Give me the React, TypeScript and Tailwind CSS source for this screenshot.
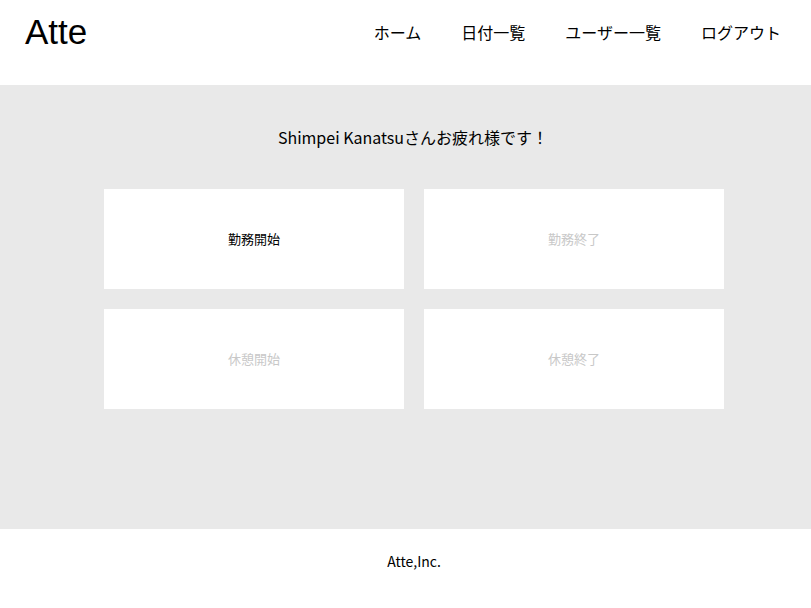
export default function App() {
  const jp = { fontFamily: '"Noto Sans CJK JP", "Liberation Sans", sans-serif' };
  return (
    <div className="w-[811px] h-[608px] flex flex-col bg-white text-black overflow-hidden" style={jp}>
      <header className="h-[85px] flex items-start justify-between pl-[25px] pr-[30px] pt-[10px]">
        <div className="text-[35px] leading-[44px]" style={{ fontFamily: '"Liberation Sans", sans-serif' }}>Atte</div>
        <nav className="flex gap-[40px] pt-[10px] text-[16px] leading-[24px]">
          <span>ホーム</span>
          <span>日付一覧</span>
          <span>ユーザー一覧</span>
          <span>ログアウト</span>
        </nav>
      </header>
      <main className="h-[444px] bg-[#e9e9e9] flex flex-col items-center pt-[40px] pl-[17px]">
        <p className="text-[16px] leading-[24px] ml-[-2px]">Shimpei Kanatsuさんお疲れ様です！</p>
        <div className="mt-[40px] grid grid-cols-[300px_300px] gap-[20px]">
          <div className="h-[100px] bg-white flex items-center justify-center text-[13px] text-black">勤務開始</div>
          <div className="h-[100px] bg-white flex items-center justify-center text-[13px] text-[#c8c8c8]">勤務終了</div>
          <div className="h-[100px] bg-white flex items-center justify-center text-[13px] text-[#c8c8c8]">休憩開始</div>
          <div className="h-[100px] bg-white flex items-center justify-center text-[13px] text-[#c8c8c8]">休憩終了</div>
        </div>
      </main>
      <footer className="h-[79px] flex items-start justify-center text-[14px] pt-[22px] pl-[17px]">Atte,Inc.</footer>
    </div>
  );
}
